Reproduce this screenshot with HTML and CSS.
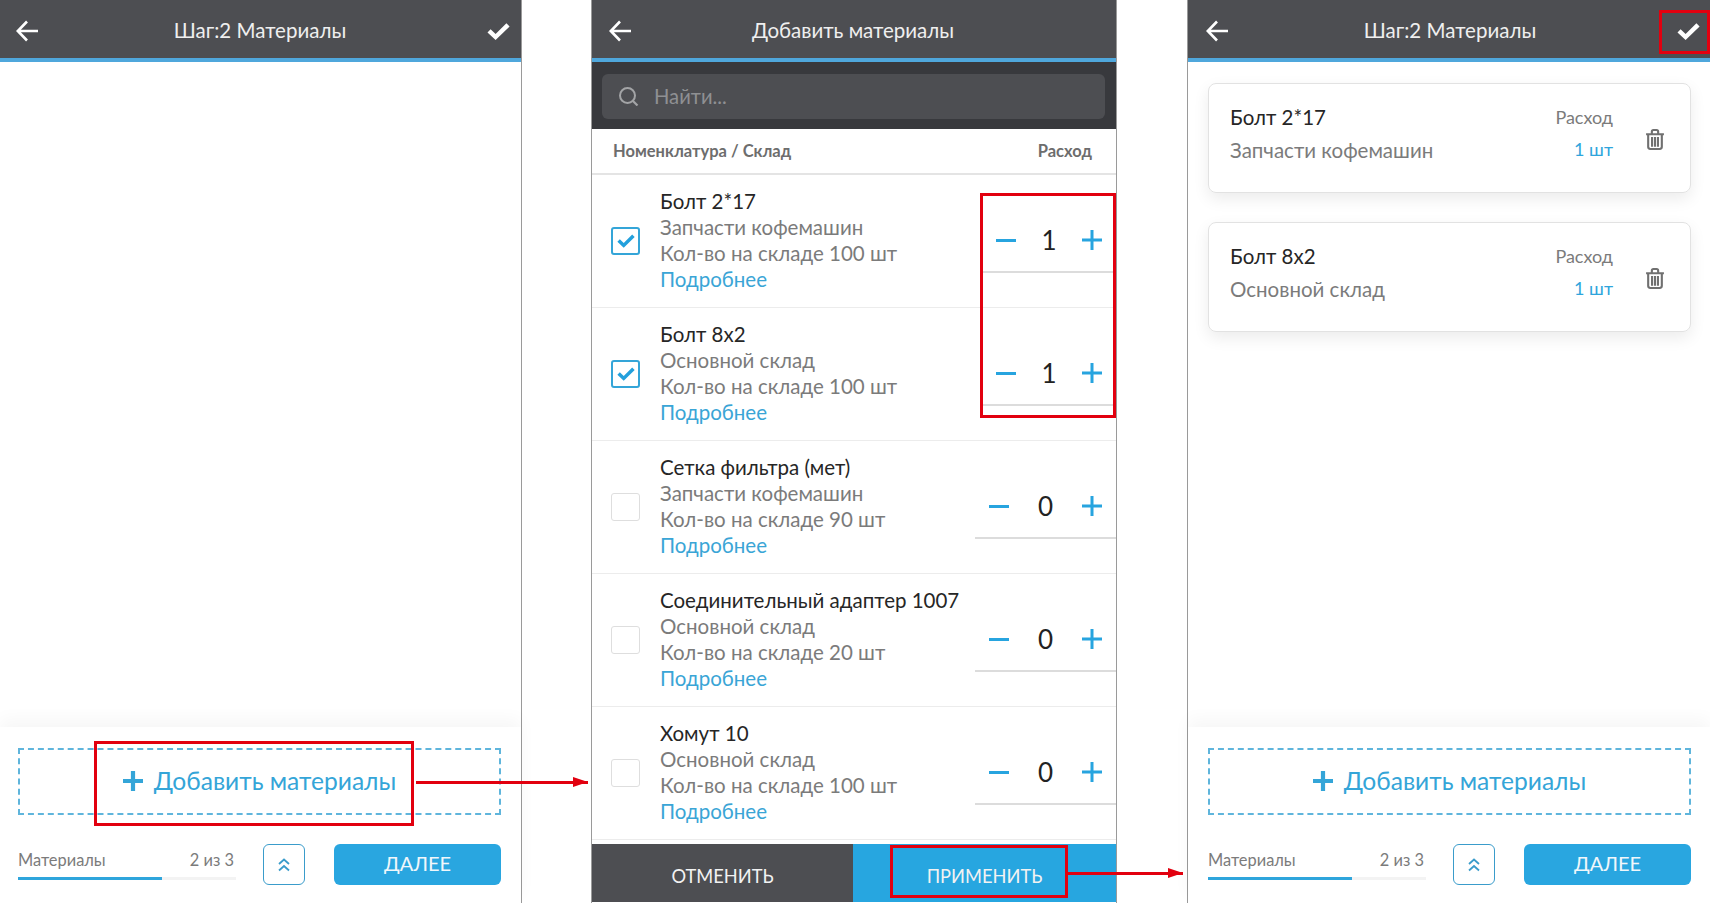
FILE: index.html
```html
<!DOCTYPE html>
<html lang="ru">
<head>
<meta charset="utf-8">
<title>Материалы</title>
<link rel="stylesheet" href="styles.css">
</head>
<body>
<svg class="defs" width="0" height="0">
  <symbol id="i-back" viewBox="0 0 23 22"><path d="M22 11H2M11 1.500 1.800 11l9.200 9.500" fill="none" stroke="currentColor" stroke-width="2.600"/></symbol>
  <symbol id="i-check" viewBox="0 0 23 17"><path d="M0.500 9.500 3.600 6.200 8.600 11 19.400 0.300 22.600 3.500 8.600 17Z" fill="currentColor"/></symbol>
  <symbol id="i-trash" viewBox="0 0 19 20"><path d="M1 5h17M6.500 4.500V2.500q0-1.500 1.500-1.500h3q1.500 0 1.500 1.500v2M3 5.500v11.500q0 2 2 2h9q2 0 2-2V5.500M6.700 7.500v9.500M9.500 7.500v9.500M12.300 7.500v9.500" fill="none" stroke="currentColor" stroke-width="2"/></symbol>
  <symbol id="i-plus" viewBox="0 0 20 20"><path d="M10 0v20M0 10h20" fill="none" stroke="currentColor" stroke-width="3"/></symbol>
  <symbol id="i-plus-bold" viewBox="0 0 20 20"><path d="M10 0v20M0 10h20" fill="none" stroke="currentColor" stroke-width="4.200"/></symbol>
  <symbol id="i-up" viewBox="0 0 12 14"><path d="M1 6 6 1.500 11 6M1 12.500 6 8 11 12.500" fill="none" stroke="currentColor" stroke-width="1.800"/></symbol>
</svg>

<main class="page">
  <section class="phone phone-a">
    <header class="topbar">
      <svg class="back"><use href="#i-back"/></svg>
      <h1 class="topbar-title">Шаг:2 Материалы</h1>
      <svg class="check"><use href="#i-check"/></svg>
    </header>
    <div class="content"></div>
    <div class="bottom">
      <button class="add"><svg class="add-plus"><use href="#i-plus-bold"/></svg>Добавить материалы</button>
      <div class="nav">
        <div class="progress">
          <div class="progress-labels"><span>Материалы</span><span>2 из 3</span></div>
          <div class="progress-track"><div class="progress-fill"></div></div>
        </div>
        <button class="up"><svg class="up-icon"><use href="#i-up"/></svg></button>
        <button class="next">ДАЛЕЕ</button>
      </div>
    </div>
  </section>

  <section class="phone phone-b">
    <header class="topbar">
      <svg class="back"><use href="#i-back"/></svg>
      <h1 class="topbar-title">Добавить материалы</h1>
      <span class="topbar-spacer"></span>
    </header>
    <div class="search-band">
      <div class="search">
        <svg class="search-icon" viewBox="0 0 21 19"><circle cx="9.500" cy="8.500" r="7.500" fill="none" stroke="currentColor" stroke-width="2"/><path d="M15 14l4.500 4.500" stroke="currentColor" stroke-width="2.200" fill="none"/></svg>
        <span>Найти...</span>
      </div>
    </div>
    <div class="thead"><span>Номенклатура / Склад</span><span>Расход</span></div>
    <div class="row">
      <span class="box on"><svg class="box-check"><use href="#i-check"/></svg></span>
      <div class="info"><div class="name">Болт 2*17</div><div>Запчасти кофемашин</div><div>Кол-во на складе 100 шт</div><a class="more">Подробнее</a></div>
      <div class="stepper narrow"><span class="minus"></span><span class="num">1</span><svg class="plus"><use href="#i-plus"/></svg></div>
    </div>
    <div class="row">
      <span class="box on"><svg class="box-check"><use href="#i-check"/></svg></span>
      <div class="info"><div class="name">Болт 8x2</div><div>Основной склад</div><div>Кол-во на складе 100 шт</div><a class="more">Подробнее</a></div>
      <div class="stepper narrow"><span class="minus"></span><span class="num">1</span><svg class="plus"><use href="#i-plus"/></svg></div>
    </div>
    <div class="row">
      <span class="box"></span>
      <div class="info"><div class="name">Сетка фильтра (мет)</div><div>Запчасти кофемашин</div><div>Кол-во на складе 90 шт</div><a class="more">Подробнее</a></div>
      <div class="stepper"><span class="minus"></span><span class="num">0</span><svg class="plus"><use href="#i-plus"/></svg></div>
    </div>
    <div class="row">
      <span class="box"></span>
      <div class="info"><div class="name">Соединительный адаптер 1007</div><div>Основной склад</div><div>Кол-во на складе 20 шт</div><a class="more">Подробнее</a></div>
      <div class="stepper"><span class="minus"></span><span class="num">0</span><svg class="plus"><use href="#i-plus"/></svg></div>
    </div>
    <div class="row">
      <span class="box"></span>
      <div class="info"><div class="name">Хомут 10</div><div>Основной склад</div><div>Кол-во на складе 100 шт</div><a class="more">Подробнее</a></div>
      <div class="stepper"><span class="minus"></span><span class="num">0</span><svg class="plus"><use href="#i-plus"/></svg></div>
    </div>
    <div class="actions"><button class="cancel">ОТМЕНИТЬ</button><button class="apply">ПРИМЕНИТЬ</button></div>
  </section>

  <section class="phone phone-c">
    <header class="topbar">
      <svg class="back"><use href="#i-back"/></svg>
      <h1 class="topbar-title">Шаг:2 Материалы</h1>
      <svg class="check"><use href="#i-check"/></svg>
    </header>
    <div class="content cards">
      <article class="card">
        <div class="card-main"><div class="name">Болт 2*17</div><div>Запчасти кофемашин</div></div>
        <div class="card-qty"><div>Расход</div><div class="qty">1 шт</div></div>
        <svg class="trash"><use href="#i-trash"/></svg>
      </article>
      <article class="card">
        <div class="card-main"><div class="name">Болт 8x2</div><div>Основной склад</div></div>
        <div class="card-qty"><div>Расход</div><div class="qty">1 шт</div></div>
        <svg class="trash"><use href="#i-trash"/></svg>
      </article>
    </div>
    <div class="bottom">
      <button class="add"><svg class="add-plus"><use href="#i-plus-bold"/></svg>Добавить материалы</button>
      <div class="nav">
        <div class="progress">
          <div class="progress-labels"><span>Материалы</span><span>2 из 3</span></div>
          <div class="progress-track"><div class="progress-fill"></div></div>
        </div>
        <button class="up"><svg class="up-icon"><use href="#i-up"/></svg></button>
        <button class="next">ДАЛЕЕ</button>
      </div>
    </div>
  </section>
</main>

<div class="mark mark-add"></div>
<div class="mark mark-steppers"></div>
<div class="mark mark-apply"></div>
<div class="mark mark-check"></div>
<div class="arrow arrow-one"></div>
<div class="arrow arrow-two"></div>
</body>
</html>
```
FILE: styles.css
```css
* { box-sizing: border-box; }
html, body { margin: 0; height: 100%; }
body {
  position: relative;
  width: 1710px;
  height: 903px;
  overflow: hidden;
  background: #fff;
  font-family: "Lato", "Open Sans", sans-serif;
  color: #757575;
}
.defs { position: absolute; }
button { font: inherit; border: 0; padding: 0; background: none; }
.page { display: flex; height: 903px; }
.phone { display: flex; flex-direction: column; height: 903px; background: #fff; }
.phone-a { width: 522px; border-right: 1px solid #9a9a9a; }
.phone-b { width: 526px; margin-left: 69px; margin-right: 70px; border-left: 1px solid #9a9a9a; border-right: 1px solid #9a9a9a; }
.phone-c { flex: 1; border-left: 1px solid #9a9a9a; }

.topbar {
  flex: none;
  height: 62px;
  display: grid;
  grid-template-columns: 1fr auto 1fr;
  align-items: center;
  padding: 4px 11px 0 16px;
  background: #4d4e52;
  border-bottom: 4px solid #4fa7dc;
  color: #fff;
}
.phone-b .topbar { padding-left: 17px; }
.phone-c .topbar { padding-left: 18px; padding-right: 10px; }
.topbar-title { margin: 0 0 2px; padding-right: 6px; font-size: 20.500px; line-height: 26px; font-weight: 400; color: #efefef; }
.phone-b .topbar-title { padding-right: 8px; }
.back { width: 23px; height: 22px; color: #fff; }
.check { width: 23px; height: 17px; color: #fff; justify-self: end; }

.content { flex: 1; }
.bottom {
  flex: none;
  height: 176px;
  padding: 21px 20px 0 18px;
  background: #fff;
  box-shadow: 0 -8px 16px rgba(0, 0, 0, .035);
}
.phone-c .bottom { padding-left: 20px; padding-right: 19px; }
.add {
  display: flex;
  align-items: center;
  justify-content: center;
  gap: 11px;
  width: 100%;
  height: 67px;
  padding-bottom: 2px;
  border: 2px dashed #5fb5dc;
  font-size: 24.600px;
  color: #34a5d8;
}
.add-plus { width: 20px; height: 20px; }
.nav { display: flex; align-items: flex-start; margin-top: 29px; }
.progress { width: 218px; padding-top: 5px; }
.progress-labels { display: flex; justify-content: space-between; font-size: 16.400px; line-height: 22px; color: #7b7b7b; padding-right: 2px; }
.progress-track { height: 3px; margin-top: 6px; background: #f3f3f3; }
.progress-fill { width: 144px; height: 3px; background: #2fa5dc; }
.up {
  width: 42px;
  height: 41px;
  margin-left: 27px;
  border: 1px solid #3a9ccb;
  border-radius: 6px;
  color: #3a9ccb;
  display: flex;
  align-items: center;
  justify-content: center;
}
.up-icon { width: 12px; height: 14px; }
.next {
  width: 167px;
  height: 41px;
  margin-left: 29px;
  padding-bottom: 3px;
  border-radius: 6px;
  background: #29a6e0;
  color: #f0f7fb;
  font-size: 20px;
}

.search-band { flex: none; height: 67px; padding: 12px 11px 10px 10px; background: #38393d; }
.search {
  height: 45px;
  display: flex;
  align-items: center;
  gap: 15px;
  padding-left: 16px;
  border-radius: 6px;
  background: #4d4e52;
  color: #8f9093;
  font-size: 20.200px;
}
.search span { margin-bottom: 2px; }
.search-icon { width: 21px; height: 19px; color: #a3a4a6; }
.thead {
  flex: none;
  height: 46px;
  display: flex;
  align-items: center;
  justify-content: space-between;
  padding: 0 24px 0 21px;
  border-bottom: 2px solid #e4e4e4;
  font-size: 16.500px;
  font-weight: 700;
  color: #6d6d6d;
}
.row {
  flex: none;
  height: 133px;
  display: flex;
  align-items: flex-start;
  padding-top: 13px;
  padding-left: 19px;
  border-bottom: 1px solid #ececec;
}
.box {
  flex: none;
  width: 29px;
  height: 28px;
  margin-top: 39px;
  margin-right: 20px;
  border: 1.500px solid #dedede;
  border-radius: 3px;
  display: flex;
  align-items: center;
  justify-content: center;
}
.box.on { border: 2px solid #34a5d8; }
.box-check { width: 18px; height: 14px; color: #23a0dc; }
.info { flex: 1; font-size: 20.500px; line-height: 26px; color: #7b7b7b; white-space: nowrap; }
.name { color: #262626; }
.more { color: #3aa5d6; }
.stepper {
  flex: none;
  width: 141px;
  height: 64px;
  margin-top: 21px;
  padding: 0 14px;
  display: flex;
  align-items: center;
  justify-content: space-between;
  border-bottom: 2px solid #dcdcdc;
}
.stepper.narrow { width: 134px; }
.minus { width: 20px; height: 3px; background: #27a4df; }
.plus { width: 20px; height: 20px; color: #27a4df; }
.num { font-size: 26px; color: #222; }
.actions { flex: none; height: 58px; margin-top: 4px; display: flex; font-size: 18.300px; color: #f2f2f2; }
.cancel { width: 261px; background: #4d4e52; color: inherit; padding-top: 6px; }
.apply { flex: 1; background: #27a6e0; color: inherit; padding-top: 6px; }

.cards { padding: 21px 19px 0 20px; display: flex; flex-direction: column; gap: 29px; }
.card {
  height: 110px;
  display: flex;
  align-items: flex-start;
  padding: 17px 0 0 21px;
  border: 1px solid #e2e2e2;
  border-radius: 8px;
  box-shadow: 0 6px 16px rgba(0, 0, 0, .08);
  font-size: 20.500px;
  color: #7b7b7b;
}
.card-main { flex: 1; line-height: 33px; }
.card-qty { text-align: right; line-height: 32px; font-size: 18px; }
.qty { color: #2fa5dc; font-size: 18px; }
.trash { flex: none; width: 20px; height: 21px; margin: 28px 25px 0 32px; color: #707070; }

.mark { position: absolute; border: 3px solid #e2000f; }
.mark-add { left: 94px; top: 741px; width: 320px; height: 85px; }
.mark-steppers { left: 980px; top: 193px; width: 136px; height: 225px; }
.mark-apply { left: 890px; top: 845px; width: 178px; height: 53px; }
.mark-check { left: 1659px; top: 10px; width: 51px; height: 44px; }
.arrow { position: absolute; height: 3px; background: #e2000f; }
.arrow::after {
  content: "";
  position: absolute;
  right: 0;
  top: -4px;
  border-left: 15px solid #e2000f;
  border-top: 5.500px solid transparent;
  border-bottom: 5.500px solid transparent;
}
.arrow-one { left: 416px; top: 781px; width: 172px; }
.arrow-two { left: 1068px; top: 872px; width: 115px; }
```
